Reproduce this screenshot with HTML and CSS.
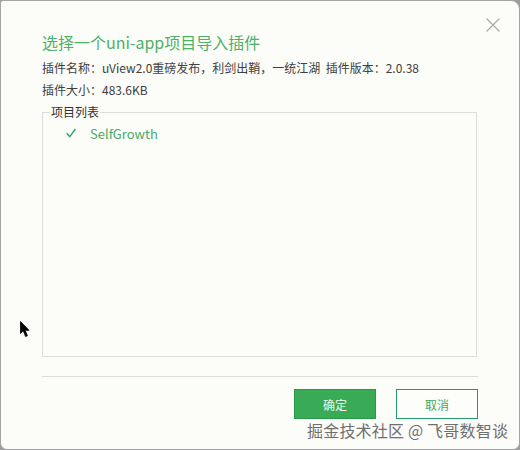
FILE: index.html
```html
<!DOCTYPE html>
<html lang="zh-CN">
<head>
  <meta charset="UTF-8">
  <meta name="viewport" content="width=device-width, initial-scale=1.0">
  <title>导入插件</title>
  <link rel="stylesheet" href="styles.css">
</head>
<body>
  <div class="dialog">
    <button class="close" title="关闭">
      <svg width="14" height="14" viewBox="0 0 14 14">
        <path d="M0.5 0.5 L13.5 13.5 M13.5 0.5 L0.5 13.5" stroke="#a9a9a9" stroke-width="1.1" fill="none"/>
      </svg>
    </button>

    <h2 class="title">选择一个uni-app项目导入插件</h2>
    <div class="info">
      <div>插件名称：uView2.0重磅发布，利剑出鞘，一统江湖&nbsp;&nbsp;插件版本：2.0.38</div>
      <div>插件大小：483.6KB</div>
    </div>

    <fieldset class="projects">
      <legend>项目列表</legend>
      <div class="project-item">
        <svg class="check" width="10" height="10" viewBox="0 0 10 10">
          <path d="M0.6 5.2 L3.8 8.6 L9.4 1" stroke="#3a9e6c" stroke-width="1.4" fill="none"/>
        </svg>
        <span>SelfGrowth</span>
      </div>
    </fieldset>

    <div class="footer">
      <button class="btn btn-primary">确定</button>
      <button class="btn">取消</button>
    </div>

    <div class="watermark">掘金技术社区 @ 飞哥数智谈</div>

    <svg class="cursor" width="11" height="17" viewBox="0 0 11 17">
      <path d="M0.5 0.5 L0.5 12.5 L3.3 9.8 L5.6 15.6 L7.4 14.8 L5.2 9.3 L9 9.3 Z" fill="#000" stroke="#000" stroke-width="0.8"/>
    </svg>
  </div>
</body>
</html>
```

FILE: styles.css
```css
html, body {
  margin: 0;
  padding: 0;
  background: #9c9c9c;
}

body {
  font-family: "Noto Sans CJK SC", "Noto Sans", sans-serif;
  color: #3b3b3b;
}

.dialog {
  position: relative;
  box-sizing: border-box;
  width: 520px;
  height: 450px;
  padding: 30px 41px 30px 41px;
  background: #fcfcf8;
  border: 1px solid #a4a4a4;
  border-radius: 3px 9px 7px 7px;
  display: flex;
  flex-direction: column;
}

.close {
  position: absolute;
  top: 17px;
  right: 19px;
  width: 14px;
  height: 14px;
  padding: 0;
  border: 0;
  background: none;
  line-height: 0;
}

.title {
  margin: 0 0 4px;
  font-size: 16px;
  line-height: 22px;
  font-weight: normal;
  color: #4cb068;
}

.info {
  font-size: 12px;
  line-height: 22px;
  color: #404040;
}

.projects {
  flex: 1;
  margin: 3px 1px 0 0;
  padding: 3px 0 0 7px;
  border: 1px solid #dcdcd8;
  min-height: 0;
}

.projects legend {
  padding: 0 1px;
  font-size: 12px;
  line-height: 16px;
  color: #333;
}

.project-item {
  display: flex;
  align-items: center;
  height: 20px;
  padding-left: 16px;
  font-size: 13px;
  color: #4aa86a;
}

.check {
  margin-right: 14px;
}

.footer {
  margin-top: 19px;
  padding-top: 12px;
  border-top: 1px solid #dcdcd8;
  display: flex;
  justify-content: flex-end;
  gap: 20px;
}

.btn {
  width: 82px;
  height: 30px;
  padding: 0;
  font-family: inherit;
  font-size: 12px;
  color: #43a862;
  background: #fdfefb;
  border: 1px solid #239a6c;
}

.btn-primary {
  color: #eafbe8;
  background: #39aa55;
  border-color: #279a4a;
}

.watermark {
  position: absolute;
  left: 306px;
  top: 418px;
  font-size: 16px;
  line-height: 22px;
  color: #6f6f6f;
  text-shadow: 0 0 2px #fff, 0 0 1px #fff;
  letter-spacing: 0.2px;
}

.cursor {
  position: absolute;
  left: 19px;
  top: 320px;
}
```
